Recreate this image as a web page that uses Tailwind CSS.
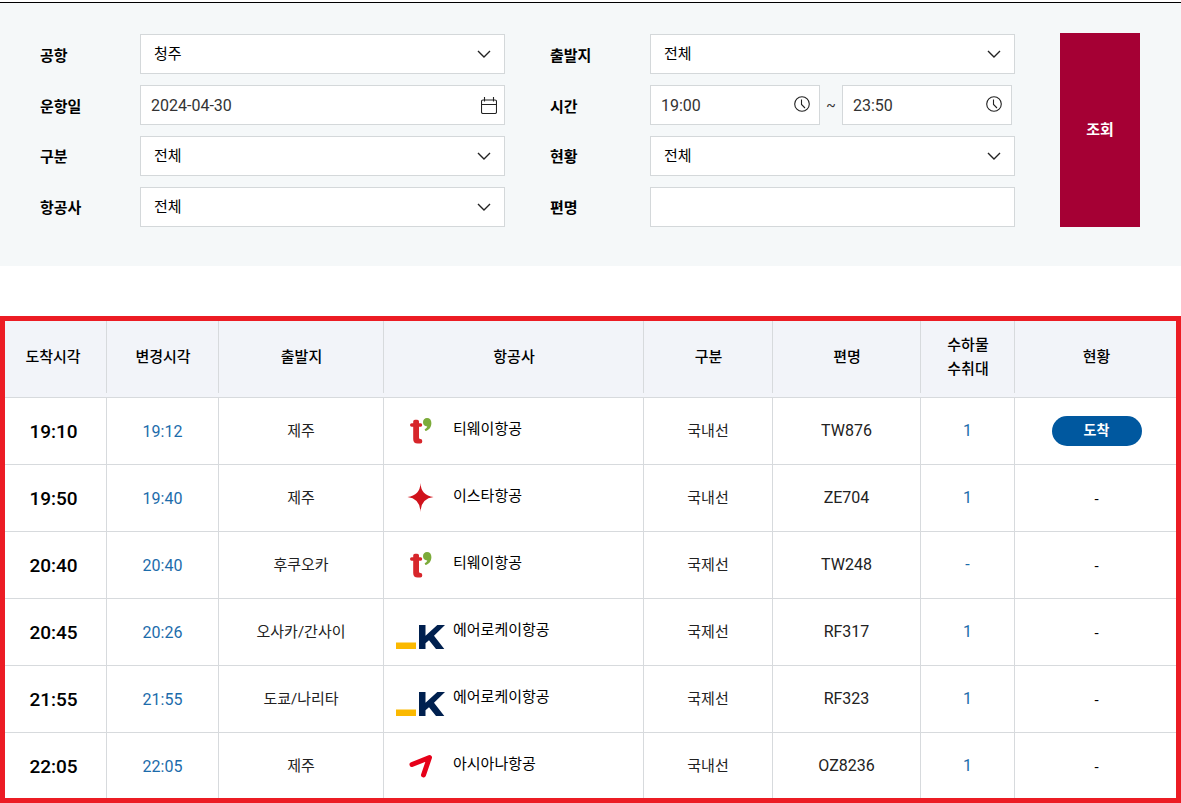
<!DOCTYPE html>
<html lang="ko">
<head>
<meta charset="utf-8">
<meta name="viewport" content="width=device-width, initial-scale=1">
<title>도착 운항 조회</title>
<script src="https://cdn.jsdelivr.net/npm/@tailwindcss/browser@4"></script>
</head>
<body class="bg-white font-['Roboto','Noto_Sans_CJK_KR',sans-serif] text-[15px] leading-6 text-black">

<!-- shared icons -->
<svg class="hidden" aria-hidden="true">
  <symbol id="chevron" viewBox="0 0 14 8"><path d="M1 1l6 6 6-6" fill="none" stroke="#222" stroke-width="1.4"/></symbol>
  <symbol id="clock" viewBox="0 0 16 16"><circle cx="8" cy="8" r="7.3" fill="none" stroke="#222" stroke-width="1.1"/><path d="M7.5 3.5v5l3.5 3.500" fill="none" stroke="#222" stroke-width="1.1"/></symbol>
  <symbol id="calendar" viewBox="0 0 16 17"><path d="M2 3h12a1.500 1.500 0 0 1 1.500 1.500v10.500a1.500 1.500 0 0 1-1.500 1.500h-12a1.500 1.500 0 0 1-1.500-1.500v-10.500a1.500 1.500 0 0 1 1.500-1.500zM.5 7.500h15M3.500 0v4.500M12.500 0v4.500" fill="none" stroke="#222" stroke-width="1.1"/></symbol>
  <symbol id="tway" viewBox="0 0 50 40">
    <path d="M18.200 10.500q0-1.800 1.800-1.800h2.200q1.800 0 1.800 1.800v1.700h1.700q1.500 0 1.500 1.800t-1.500 1.800h-1.700v10.700q0 1.500 1.500 1.500q1.800 0 1.800 2.200t-2 2.300h-2.600q-4.500 0-4.500-4.500v-12.200h-1.500q-1.700 0-1.700-1.800t1.700-1.800h1.500z" fill="#d7262b"/>
    <path d="M32 7c2.700 0 4.400 2 4.400 4.900 0 4.300-2.600 7.400-6 8l-.8-1.800c1.500-.6 2.400-1.500 2.700-2.700-2.500.1-4.300-1.700-4.300-4.100 0-2.500 1.700-4.300 4-4.300z" fill="#7cab3a"/>
  </symbol>
  <symbol id="eastar" viewBox="0 0 50 40"><path d="M25.500 5Q26 17.500 38.500 19Q26 20.500 25.500 34Q25 20.500 12.500 19Q25 17.500 25.500 5z" fill="#d0131c"/><path d="M25.500 14Q26.500 18 30.500 19Q26.500 20 25.500 24.500Q24.500 20 20.500 19Q24.500 18 25.500 14z" fill="#d0131c" stroke="#d0131c" stroke-width="1"/></symbol>
  <symbol id="aerok" viewBox="0 0 50 40"><path d="M1 30.500h20v6.500h-20z" fill="#fbb900"/><path d="M24 13h6.500v10.700l11.800-10.700h7.700l-11 10.700 10.300 13.300h-8.300l-7-8.700-3.500 3v5.700h-6.500z" fill="#00204f"/></symbol>
  <symbol id="asiana" viewBox="0 0 50 40"><path d="M17 18.500l17.500-7-6 17.500" fill="none" stroke="#e60019" stroke-width="5" stroke-linecap="round" stroke-linejoin="round"/></symbol>
</svg>

<form class="mt-[2px] flex flex-col border-t border-black bg-[#f5f8f9] pt-[30px] pr-[41px] pb-[39px] pl-10">
  <div class="flex gap-[45px]">
    <div class="grid flex-1 grid-cols-2 gap-x-[45px] gap-y-[11px] pt-px">

      <div class="flex h-10 items-center">
        <label for="airport" class="w-[100px] shrink-0 pt-1 font-bold">공항</label>
        <div class="relative h-10 flex-1">
          <select id="airport" class="h-full w-full appearance-none rounded-none border border-[#d4d8da] bg-white px-[13px] text-[15px]"><option>청주</option></select>
          <svg class="pointer-events-none absolute top-4 right-[14px] h-2 w-3.5"><use href="#chevron"/></svg>
        </div>
      </div>
      <div class="flex h-10 items-center">
        <label for="origin" class="w-[100px] shrink-0 pt-1 font-bold">출발지</label>
        <div class="relative h-10 flex-1">
          <select id="origin" class="h-full w-full appearance-none rounded-none border border-[#d4d8da] bg-white px-[13px] text-[15px]"><option>전체</option></select>
          <svg class="pointer-events-none absolute top-4 right-[14px] h-2 w-3.5"><use href="#chevron"/></svg>
        </div>
      </div>

      <div class="flex h-10 items-center">
        <label for="date" class="w-[100px] shrink-0 pt-1 font-bold">운항일</label>
        <div class="relative h-10 flex-1">
          <input id="date" type="text" value="2024-04-30" class="h-full w-full border border-[#d4d8da] bg-white px-[10px] text-base text-[#333]">
          <svg class="pointer-events-none absolute top-3 right-2 h-[17px] w-4"><use href="#calendar"/></svg>
        </div>
      </div>
      <div class="flex h-10 items-center pr-[3px]">
        <label for="from" class="w-[100px] shrink-0 pt-1 font-bold">시간</label>
        <div class="relative h-10 flex-1">
          <input id="from" type="text" value="19:00" class="h-full w-full border border-[#d4d8da] bg-white px-[10px] text-base text-[#333]">
          <svg class="pointer-events-none absolute top-[11px] right-[10px] size-4"><use href="#clock"/></svg>
        </div>
        <span class="w-[22px] text-center text-sm text-[#333]">~</span>
        <div class="relative h-10 flex-1">
          <input id="to" aria-label="종료 시간" type="text" value="23:50" class="h-full w-full border border-[#d4d8da] bg-white px-[10px] text-base text-[#333]">
          <svg class="pointer-events-none absolute top-[11px] right-[10px] size-4"><use href="#clock"/></svg>
        </div>
      </div>

      <div class="flex h-10 items-center">
        <label for="kind" class="w-[100px] shrink-0 pt-0.5 font-bold">구분</label>
        <div class="relative h-10 flex-1">
          <select id="kind" class="h-full w-full appearance-none rounded-none border border-[#d4d8da] bg-white px-[13px] text-[15px]"><option>전체</option></select>
          <svg class="pointer-events-none absolute top-4 right-[14px] h-2 w-3.5"><use href="#chevron"/></svg>
        </div>
      </div>
      <div class="flex h-10 items-center">
        <label for="status" class="w-[100px] shrink-0 pt-0.5 font-bold">현황</label>
        <div class="relative h-10 flex-1">
          <select id="status" class="h-full w-full appearance-none rounded-none border border-[#d4d8da] bg-white px-[13px] text-[15px]"><option>전체</option></select>
          <svg class="pointer-events-none absolute top-4 right-[14px] h-2 w-3.5"><use href="#chevron"/></svg>
        </div>
      </div>

      <div class="flex h-10 items-center">
        <label for="airline" class="w-[100px] shrink-0 pt-0.5 font-bold">항공사</label>
        <div class="relative h-10 flex-1">
          <select id="airline" class="h-full w-full appearance-none rounded-none border border-[#d4d8da] bg-white px-[13px] text-[15px]"><option>전체</option></select>
          <svg class="pointer-events-none absolute top-4 right-[14px] h-2 w-3.5"><use href="#chevron"/></svg>
        </div>
      </div>
      <div class="flex h-10 items-center">
        <label for="flight" class="w-[100px] shrink-0 pt-0.5 font-bold">편명</label>
        <input id="flight" type="text" class="h-10 min-w-0 flex-1 border border-[#d4d8da] bg-white px-[10px] text-base">
      </div>
    </div>
    <button type="submit" class="w-20 shrink-0 bg-[#a50034] font-bold text-white">조회</button>
  </div>
</form>

<main class="mt-[50px] border-[5px] border-[#ec1c24]">
  <table class="w-full table-fixed border-separate border-spacing-0 text-center">
    <colgroup>
      <col class="w-[102px]"><col class="w-[112px]"><col class="w-[165px]"><col class="w-[260px]"><col class="w-[129px]"><col class="w-[148px]"><col class="w-[94px]"><col class="w-[161px]">
    </colgroup>
    <thead class="[&_th]:relative [&_th]:h-[77px] [&_th]:border-b [&_th]:border-[#d7dadd] [&_th]:bg-[#f2f4f9] [&_th]:pb-1 [&_th]:font-medium [&_th:first-child]:pr-1.5 [&_th:last-child]:pl-0.5 [&_th:not(:last-child)]:after:absolute [&_th:not(:last-child)]:after:top-0 [&_th:not(:last-child)]:after:right-0 [&_th:not(:last-child)]:after:bottom-1 [&_th:not(:last-child)]:after:w-px [&_th:not(:last-child)]:after:bg-[#d7dadd]">
      <tr><th scope="col">도착시각</th><th scope="col">변경시각</th><th scope="col">출발지</th><th scope="col">항공사</th><th scope="col">구분</th><th scope="col">편명</th><th scope="col">수하물<br>수취대</th><th scope="col">현황</th></tr>
    </thead>
    <tbody class="[&_td]:h-[67px] [&_td]:border-b [&_td]:border-[#d7dadd] [&_td:first-child]:pr-1 [&_td:last-child]:pl-0.5 [&_td:not(:last-child)]:border-r [&_tr:last-child>td]:h-[65px] [&_tr:last-child>td]:border-b-0">
      <tr>
        <td class="pt-0.5 text-[19px] font-medium">19:10</td><td class="pt-0.5 text-base text-[#1c6cab]">19:12</td><td class="text-[#222]">제주</td>
        <td><div class="flex items-center gap-2 pl-[11px]"><svg class="h-10 w-[50px]"><use href="#tway"/></svg><span class="pb-1">티웨이항공</span></div></td>
        <td class="text-[#222]">국내선</td><td class="text-base text-[#222]">TW876</td><td class="text-base text-[#1c6cab]">1</td>
        <td><span class="mx-auto flex h-[30px] w-[90px] items-center justify-center rounded-full bg-[#00589f] pb-0.5 text-sm font-bold text-white">도착</span></td>
      </tr>
      <tr>
        <td class="pt-0.5 text-[19px] font-medium">19:50</td><td class="pt-0.5 text-base text-[#1c6cab]">19:40</td><td class="text-[#222]">제주</td>
        <td><div class="flex items-center gap-2 pl-[11px]"><svg class="h-10 w-[50px]"><use href="#eastar"/></svg><span class="pb-1">이스타항공</span></div></td>
        <td class="text-[#222]">국내선</td><td class="text-base text-[#222]">ZE704</td><td class="text-base text-[#1c6cab]">1</td><td class="pt-0.5">-</td>
      </tr>
      <tr>
        <td class="pt-0.5 text-[19px] font-medium">20:40</td><td class="pt-0.5 text-base text-[#1c6cab]">20:40</td><td class="text-[#222]">후쿠오카</td>
        <td><div class="flex items-center gap-2 pl-[11px]"><svg class="h-10 w-[50px]"><use href="#tway"/></svg><span class="pb-1">티웨이항공</span></div></td>
        <td class="text-[#222]">국제선</td><td class="text-base text-[#222]">TW248</td><td class="text-base text-[#1c6cab]">-</td><td class="pt-0.5">-</td>
      </tr>
      <tr>
        <td class="pt-0.5 text-[19px] font-medium">20:45</td><td class="pt-0.5 text-base text-[#1c6cab]">20:26</td><td class="text-[#222]">오사카/간사이</td>
        <td><div class="flex items-center gap-2 pl-[11px]"><svg class="h-10 w-[50px]"><use href="#aerok"/></svg><span class="pb-1">에어로케이항공</span></div></td>
        <td class="text-[#222]">국제선</td><td class="text-base text-[#222]">RF317</td><td class="text-base text-[#1c6cab]">1</td><td class="pt-0.5">-</td>
      </tr>
      <tr>
        <td class="pt-0.5 text-[19px] font-medium">21:55</td><td class="pt-0.5 text-base text-[#1c6cab]">21:55</td><td class="text-[#222]">도쿄/나리타</td>
        <td><div class="flex items-center gap-2 pl-[11px]"><svg class="h-10 w-[50px]"><use href="#aerok"/></svg><span class="pb-1">에어로케이항공</span></div></td>
        <td class="text-[#222]">국제선</td><td class="text-base text-[#222]">RF323</td><td class="text-base text-[#1c6cab]">1</td><td class="pt-0.5">-</td>
      </tr>
      <tr>
        <td class="pt-0.5 text-[19px] font-medium">22:05</td><td class="pt-0.5 text-base text-[#1c6cab]">22:05</td><td class="text-[#222]">제주</td>
        <td><div class="flex items-center gap-2 pl-[11px]"><svg class="h-10 w-[50px]"><use href="#asiana"/></svg><span class="pb-1">아시아나항공</span></div></td>
        <td class="text-[#222]">국내선</td><td class="text-base text-[#222]">OZ8236</td><td class="text-base text-[#1c6cab]">1</td><td class="pt-0.5">-</td>
      </tr>
    </tbody>
  </table>
</main>
</body>
</html>
